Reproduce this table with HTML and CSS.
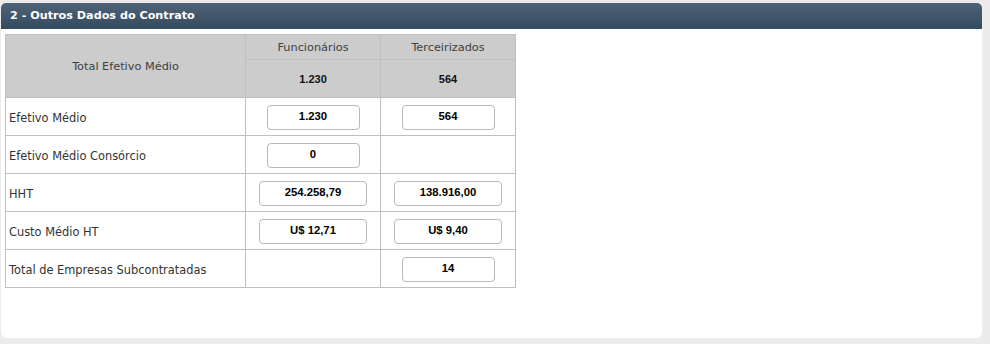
FILE: index.html
```html
<!DOCTYPE html>
<html lang="pt-BR">
<head>
<meta charset="utf-8">
<title>Outros Dados do Contrato</title>
<link rel="stylesheet" href="styles.css">
</head>
<body>
<div class="panel">
  <div class="panel-header">2 - Outros Dados do Contrato</div>
  <div class="panel-body">
    <table class="grid">
      <colgroup>
        <col class="c-label">
        <col class="c-val">
        <col class="c-val">
      </colgroup>
      <thead>
        <tr class="h1">
          <th rowspan="2" class="th-title">Total Efetivo Médio</th>
          <th>Funcionários</th>
          <th>Terceirizados</th>
        </tr>
        <tr class="h2">
          <th class="th-num">1.230</th>
          <th class="th-num">564</th>
        </tr>
      </thead>
      <tbody>
        <tr>
          <td class="label">Efetivo Médio</td>
          <td class="val"><input class="inp" type="text" value="1.230" readonly></td>
          <td class="val"><input class="inp" type="text" value="564" readonly></td>
        </tr>
        <tr>
          <td class="label">Efetivo Médio Consórcio</td>
          <td class="val"><input class="inp" type="text" value="0" readonly></td>
          <td class="val"></td>
        </tr>
        <tr>
          <td class="label">HHT</td>
          <td class="val"><input class="inp wide" type="text" value="254.258,79" readonly></td>
          <td class="val"><input class="inp wide" type="text" value="138.916,00" readonly></td>
        </tr>
        <tr>
          <td class="label">Custo Médio HT</td>
          <td class="val"><input class="inp wide" type="text" value="U$ 12,71" readonly></td>
          <td class="val"><input class="inp wide" type="text" value="U$ 9,40" readonly></td>
        </tr>
        <tr>
          <td class="label">Total de Empresas Subcontratadas</td>
          <td class="val"></td>
          <td class="val"><input class="inp" type="text" value="14" readonly></td>
        </tr>
      </tbody>
    </table>
  </div>
</div>
</body>
</html>
```
FILE: styles.css
```css
html, body {
  margin: 0;
  padding: 0;
}
body {
  background: #ececec;
  font-family: "DejaVu Sans", Verdana, sans-serif;
}
.panel {
  margin: 3px 8px 0 1px;
  height: 335px;
  background: #ffffff;
  border-radius: 5px 5px 6px 6px;
  box-sizing: border-box;
}
.panel-header {
  height: 26px;
  line-height: 26px;
  padding-left: 9px;
  border-radius: 5px 5px 0 0;
  background: linear-gradient(#4f6377, #344a5f);
  color: #ffffff;
  font-weight: bold;
  font-size: 11.2px;
}
.panel-body {
  padding: 5px 0 0 4px;
}
.grid {
  border-collapse: collapse;
  width: 511px;
  table-layout: fixed;
}
.c-label { width: 240px; }
.c-val { width: 135px; }
.grid th,
.grid td {
  border: 1px solid #bfbfbf;
  padding: 0;
}
.grid th {
  background: #cccccd;
  font-weight: normal;
  font-size: 11.3px;
  color: #404040;
  text-align: center;
}
.h1 th { height: 24px; }
.h2 th { height: 37px; }
.th-title { color: #333; }
.grid .th-num {
  font-family: "Liberation Sans", Arial, sans-serif;
  font-weight: bold;
  font-size: 11px;
  color: #111;
}
.grid td {
  height: 37px;
  font-size: 11.4px;
  color: #333333;
}
.grid .label {
  padding: 2px 0 0 3px;
  height: 35px;
  text-align: left;
}
.val {
  text-align: center;
  vertical-align: middle;
}
.inp {
  box-sizing: border-box;
  width: 93px;
  height: 25px;
  margin: 1px 0 0 0;
  padding: 0 0 3px 0;
  border: 1px solid #b9b9b9;
  border-radius: 4px;
  background: #ffffff;
  font-family: "Liberation Sans", Arial, sans-serif;
  font-weight: bold;
  font-size: 11.3px;
  color: #000000;
  text-align: center;
  outline: none;
  vertical-align: middle;
}
.inp.wide { width: 108px; }
```
